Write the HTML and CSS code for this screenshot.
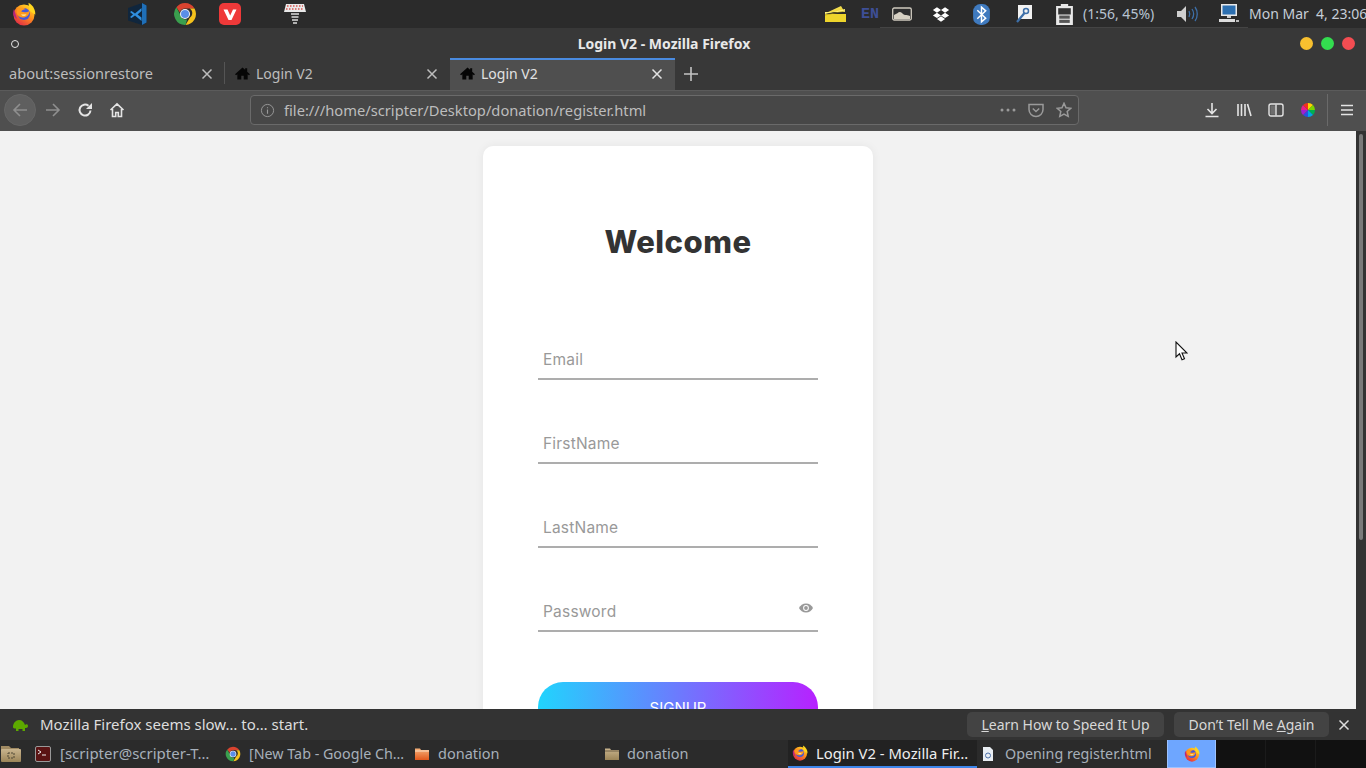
FILE: index.html
```html
<!DOCTYPE html>
<html lang="en">
<head>
<meta charset="utf-8">
<title>Login V2 - Mozilla Firefox</title>
<link rel="stylesheet" href="styles.css">
</head>
<body>
<svg class="defs" aria-hidden="true" width="0" height="0">
  <defs>
    <linearGradient id="fxg" x1="0.85" y1="0" x2="0.2" y2="1"><stop offset="0" stop-color="#ffe226"/><stop offset="0.45" stop-color="#ff8f1c"/><stop offset="1" stop-color="#e0244a"/></linearGradient>
    <linearGradient id="btn-f" x1="0" y1="0" x2="0" y2="1"><stop offset="0" stop-color="#c9b48e"/><stop offset="1" stop-color="#9c8558"/></linearGradient>
    <linearGradient id="org" x1="0" y1="0" x2="0" y2="1"><stop offset="0" stop-color="#f6b27a"/><stop offset="1" stop-color="#e2581c"/></linearGradient>
    <linearGradient id="ylw" x1="0" y1="0" x2="1" y2="1"><stop offset="0" stop-color="#fff27a"/><stop offset="1" stop-color="#e8c920"/></linearGradient>
    <symbol id="firefox" viewBox="0 0 24 24">
      <circle cx="12" cy="13" r="10.500" fill="url(#fxg)"/>
      <path d="M16.500.8c4.500 2.500 7 7 6.800 12l-6-4.300z" fill="#ffd71f"/>
      <path d="M2 7c-.8 2-1 4-.6 6 1 2 2 3 3.600 4z" fill="#b8257f"/>
      <circle cx="12" cy="12" r="6" fill="#4658d8"/>
      <path d="M5 7.500c2.500-2 6.500-2.300 8.500-.3-2 .3-4 1-4.300 2.300 2.500 1.300 6.300.8 8.300-.5.300 4-3.500 7-7.300 6.500-3.200-.4-5.200-2.500-5.700-5z" fill="#ff9a1e"/>
      <path d="M9 12.500h5.500c-1 1.500-4 2-5.500 0z" fill="#fff3b0"/>
    </symbol>
    <symbol id="chrome" viewBox="0 0 24 24">
      <path d="M12 1a11 11 0 0 1 9.500 5.500H12a5.500 5.500 0 0 0-5.200 3.700L3.400 5.300A11 11 0 0 1 12 1z" fill="#d9432f"/>
      <path d="M21.500 6.500A11 11 0 0 1 12.500 23l4.300-7.300a5.500 5.500 0 0 0 0-9.200z" fill="#f5c21c"/>
      <path d="M12.500 23A11 11 0 0 1 3.400 5.300l4.700 8.900a5.500 5.500 0 0 0 6 3.200z" fill="#3a9f4e"/>
      <circle cx="12" cy="12" r="5" fill="#f4f4f4"/><circle cx="12" cy="12" r="4" fill="#5a8ee8"/>
    </symbol>
    <symbol id="home" viewBox="0 0 16 16"><path d="M8 1.500 0 8.800l1.200 1.100L2.500 8.800V14.500h4.200v-4h2.600v4h4.200V8.800l1.300 1.100L16 8.800l-3-2.700V2.500h-2.200v1.600z" fill="currentColor"/></symbol>
    <symbol id="close" viewBox="0 0 12 12"><path d="M1.500 1.500l9 9M10.500 1.500l-9 9" stroke="currentColor" stroke-width="1.500" fill="none"/></symbol>
  </defs>
</svg>

<div class="desktop">
  <header class="panel">
    <div class="panel-left">
      <svg class="ic24 l-fx"><use href="#firefox"/></svg>
      <svg class="ic24 l-vs" viewBox="0 0 24 24"><path d="M3 6 17 1l4.500 2.500v17L17 23 3 18.500z" fill="#10263d"/><path d="M17 1l4.500 2.500v17L17 23z" fill="#1f6fb8"/><path d="M16.500 6 10 11.500 6.500 9 5 10l3 2.500L5 15l1.500 1L10 13.500l6.500 5.500v-3.500L12.500 12.500l4-3.500z" fill="#2f8fe0"/></svg>
      <svg class="ic24 l-ch"><use href="#chrome"/></svg>
      <svg class="ic24 l-vi" viewBox="0 0 24 24"><rect x="1" y="1" width="22" height="22" rx="5" fill="#ef3939"/><path d="M5.500 7.500h4l2.700 6 2.800-6h3.500L13.500 18h-3z" fill="#fff"/></svg>
      <svg class="ic24 l-fan" viewBox="0 0 24 24"><path d="M3 2h18l2 8H1z" fill="#e9e9e9"/><path d="M4 4h16M3 7h18" stroke="#d9534f" stroke-width="1.500" stroke-dasharray="1.500 1.500"/><path d="M8 12h8M8.500 15h7M9 18h6M10 21h4" stroke="#ddd" stroke-width="1.500"/></svg>
    </div>
    <div class="panel-right">
      <svg class="ri r-note" viewBox="0 0 21 16"><path d="M1 7 16 0l3 5z" fill="url(#ylw)"/><path d="M0 8 20 3v3H0z" fill="#fff27a"/><rect x="0" y="8" width="21" height="8" fill="#eed52c"/><path d="M0 9 20 5" stroke="#a08d16" stroke-width=".6"/></svg>
      <span class="lang">EN</span>
      <svg class="ri r-img" viewBox="0 0 20 14"><rect x=".7" y="1" width="18.600" height="12" rx="1.500" fill="#2e2e2e" stroke="#cfcabf" stroke-width="1.300"/><path d="M2 12V8c3-1 4-3 6-3s3 3 5 3 3 0 5 1v3z" fill="#d6d0c2"/></svg>
      <svg class="ri r-drop" viewBox="0 0 20 18"><path d="M5.500 1 10 4 5.500 7 1 4zM14.500 1 19 4l-4.500 3L10 4zM5.500 7 10 10l-4.500 3L1 10zM14.500 7 19 10l-4.500 3L10 10zM5.500 14 10 11l4.500 3L10 17z" fill="#fff"/></svg>
      <svg class="ri r-bt" viewBox="0 0 16 20"><rect x="0" y="0" width="16" height="20" rx="7" fill="#3f7abf"/><path d="M4 6l8 7.500L8 17V3l4 3.500L4 14" stroke="#fff" stroke-width="1.400" fill="none"/></svg>
      <svg class="ri r-tool" viewBox="0 0 18 20"><rect x="3" y="1" width="14" height="14" fill="#f2f2f2"/><circle cx="11" cy="7" r="2.500" fill="none" stroke="#3d6fa8" stroke-width="1.500"/><path d="M9.500 9 2 18" stroke="#3d6fa8" stroke-width="2.200"/></svg>
      <svg class="ri r-bat" viewBox="0 0 16 20"><path d="M4.500 0h7v2H16v18H0V2h4.500z" fill="#e8e8e8"/><rect x="2" y="4" width="12" height="6" fill="#333"/><rect x="3" y="11" width="10" height="3" fill="#555"/><rect x="3" y="15" width="10" height="3" fill="#555"/></svg>
      <span class="bat-text">(1:56, 45%)</span>
      <svg class="ri r-vol" viewBox="0 0 22 18"><path d="M1 6h4l5-5v16l-5-5H1z" fill="#cfcfcf"/><path d="M13 6c1 2 1 4 0 6M16 4c2 3 2 7 0 10M19 2c3 4 3 10 0 14" stroke="#3d6fa8" stroke-width="1.300" fill="none"/></svg>
      <svg class="ri r-pc" viewBox="0 0 21 20"><rect x="3" y="0" width="16" height="12" fill="#e8e8e8"/><rect x="4.500" y="1.500" width="13" height="9" fill="#2c6fb0"/><path d="M9 12h4v2H9z" fill="#ccc"/><path d="M1 15h16v3H1z" fill="#ddd"/><path d="M18 16h3v2h-3z" fill="#bbb"/></svg>
      <span class="clock">Mon Mar&nbsp; 4, 23:06</span>
    </div>
    <i class="panel-line"></i>
  </header>

  <div class="titlebar">
    <span class="title-dot"></span>
    <span class="title">Login V2 - Mozilla Firefox</span>
    <div class="lights"><i class="light yellow"></i><i class="light green"></i><i class="light red"></i></div>
  </div>

  <div class="tabstrip">
    <div class="tab sep"><span class="tab-label tab-plain">about:sessionrestore</span><svg class="tab-x"><use href="#close"/></svg></div>
    <div class="tab"><svg class="tab-home"><use href="#home"/></svg><span class="tab-label">Login V2</span><svg class="tab-x"><use href="#close"/></svg></div>
    <div class="tab active"><svg class="tab-home"><use href="#home"/></svg><span class="tab-label">Login V2</span><svg class="tab-x"><use href="#close"/></svg></div>
    <svg class="tab-plus" viewBox="0 0 14 14"><path d="M7 0v14M0 7h14" stroke="currentColor" stroke-width="1.600"/></svg>
  </div>

  <nav class="navbar">
    <span class="back"><svg class="nav-ic dim" viewBox="0 0 16 16"><path d="M15 8H2M8 2 2 8l6 6" stroke="currentColor" stroke-width="1.600" fill="none"/></svg></span>
    <svg class="nav-ic dim fwd" viewBox="0 0 16 16"><path d="M1 8h13M8 2l6 6-6 6" stroke="currentColor" stroke-width="1.600" fill="none"/></svg>
    <svg class="nav-ic rel" viewBox="0 0 16 16"><path d="M13.500 8.500A5.500 5.500 0 1 1 11.500 3.800" stroke="currentColor" stroke-width="2" fill="none"/><path d="M15 1v6H9z" fill="currentColor"/></svg>
    <svg class="nav-ic hm" viewBox="0 0 16 16"><path d="M1.500 8 8 1.800 14.500 8M3.500 7v7.500h3.200v-4h2.600v4h3.200V7" stroke="currentColor" stroke-width="1.600" fill="none"/></svg>
    <div class="urlbar">
      <svg class="u-info" viewBox="0 0 16 16"><circle cx="8" cy="8" r="6.500" stroke="currentColor" fill="none"/><path d="M8 7v4.500M8 4.500v1.200" stroke="currentColor" stroke-width="1.200"/></svg>
      <span class="url">file:///home/scripter/Desktop/donation/register.html</span>
      <svg class="u-dots" viewBox="0 0 16 4"><circle cx="2" cy="2" r="1.500"/><circle cx="8" cy="2" r="1.500"/><circle cx="14" cy="2" r="1.500"/></svg>
      <svg class="u-pocket" viewBox="0 0 16 16"><path d="M1 2.500h14v5a7 7 0 0 1-14 0z" stroke="currentColor" stroke-width="1.500" fill="none"/><path d="M4.800 6.500 8 9.500l3.200-3" stroke="currentColor" stroke-width="1.500" fill="none"/></svg>
      <svg class="u-star" viewBox="0 0 16 16"><path d="M8 1.300l2 4.500 4.800.5-3.600 3.200 1 4.800L8 12l-4.200 2.300 1-4.800L1.200 6.300 6 5.800z" stroke="currentColor" stroke-width="1.500" fill="none"/></svg>
    </div>
    <svg class="nav-ic dl" viewBox="0 0 16 16"><path d="M8 1v10M3.500 7 8 11.500 12.500 7M1.500 14.500h13" stroke="currentColor" stroke-width="1.600" fill="none"/></svg>
    <svg class="nav-ic lib" viewBox="0 0 16 16"><path d="M2 2v12M5.500 2v12M9 2v12M11.500 2l3.500 12" stroke="currentColor" stroke-width="1.600" fill="none"/></svg>
    <svg class="nav-ic side" viewBox="0 0 16 16"><rect x="1" y="2" width="14" height="12" rx="2" stroke="currentColor" stroke-width="1.400" fill="none"/><rect x="2.500" y="3.500" width="5" height="9" fill="currentColor" opacity=".2"/><path d="M8 2.500v11" stroke="currentColor" stroke-width="1.400"/></svg>
    <svg class="nav-ic wheel" viewBox="0 0 16 16">
      <path d="M8 8V1a7 7 0 0 1 5 2z" fill="#ffd400"/><path d="M8 8l5-5a7 7 0 0 1 2 5z" fill="#7bd500"/><path d="M8 8h7a7 7 0 0 1-2 5z" fill="#00b050"/><path d="M8 8l5 5a7 7 0 0 1-5 2z" fill="#00a7e8"/><path d="M8 8v7a7 7 0 0 1-5-2z" fill="#2a4fe0"/><path d="M8 8l-5 5a7 7 0 0 1-2-5z" fill="#a020d0"/><path d="M8 8H1a7 7 0 0 1 2-5z" fill="#e8208c"/><path d="M8 8 3 3a7 7 0 0 1 5-2z" fill="#f03020"/>
    </svg>
    <i class="nav-sep"></i>
    <svg class="nav-ic menu" viewBox="0 0 16 16"><path d="M2 3.500h12M2 8h12M2 12.500h12" stroke="currentColor" stroke-width="1.600"/></svg>
  </nav>

  <main class="viewport">
    <div class="page">
      <form class="card">
        <h1 class="welcome">Welcome</h1>
        <label class="field"><span class="ph">Email</span></label>
        <label class="field"><span class="ph">FirstName</span></label>
        <label class="field"><span class="ph">LastName</span></label>
        <label class="field"><span class="ph">Password</span>
          <svg class="eye" viewBox="0 0 14 10"><path d="M7 .5C3.800.5 1.200 2.500 0 5c1.200 2.500 3.800 4.500 7 4.500s5.800-2 7-4.500C12.800 2.500 10.200.5 7 .5z" fill="#999"/><circle cx="7" cy="5" r="2.900" fill="#fff"/><circle cx="7" cy="5" r="1.900" fill="#999"/></svg>
        </label>
        <button class="signup" type="button">SIGNUP</button>
      </form>
    </div>
    <div class="scrollbar"><i class="thumb"></i></div>
    <svg class="cursor" viewBox="0 0 13 20"><path d="M1 1v15l3.500-3.200 2.500 6 2.500-1-2.500-5.800H12z" fill="#fff" stroke="#111" stroke-width="1.100"/></svg>
  </main>

  <div class="notice">
    <svg class="turtle" viewBox="0 0 16 14"><path d="M1 9c0-4 3-7 6-7s5 2 6 5c1-1 3-1 3 1s-2 2-3 2v3h-2.500v-2h-4v2H4v-2.500C2 10.500 1 10 1 9z" fill="#5da900"/></svg>
    <span class="notice-text">Mozilla Firefox seems slow… to… start.</span>
    <button class="nbtn b1" type="button"><u>L</u>earn How to Speed It Up</button>
    <button class="nbtn b2" type="button">Don’t Tell Me <u>A</u>gain</button>
    <svg class="n-x"><use href="#close"/></svg>
  </div>

  <footer class="taskbar">
    <svg class="task-ic t-fm" viewBox="0 0 22 18"><path d="M1 1h8l2 2h8v3H1z" fill="#a08a62"/><rect x="1" y="4" width="20" height="13" rx="1" fill="url(#btn-f)"/><path d="M8 8h6v5H8z" fill="none" stroke="#4e4634" stroke-dasharray="2 1"/></svg>
    <svg class="task-ic t-term" viewBox="0 0 16 16"><rect x=".5" y=".5" width="15" height="15" rx="1.500" fill="#5a1414" stroke="#999"/><path d="M3 4l3 2-3 2M7 9h4" stroke="#eee" fill="none"/></svg>
    <span class="task t1">[scripter@scripter-T…</span>
    <svg class="task-ic t-ch"><use href="#chrome"/></svg>
    <span class="task t2">[New Tab - Google Ch…</span>
    <svg class="task-ic t-f1" viewBox="0 0 16 16"><path d="M1 2.500h5l1 1.500h8v10H1z" fill="url(#org)"/><path d="M1 5h14" stroke="#fbe0c8"/></svg>
    <span class="task t3">donation</span>
    <svg class="task-ic t-f2" viewBox="0 0 16 16"><path d="M1 2.500h5l1 1.500h8v10H1z" fill="url(#btn-f)"/><path d="M1 5h14" stroke="#6e5f44"/></svg>
    <span class="task t4">donation</span>
    <div class="task-active">
      <svg class="task-ic"><use href="#firefox"/></svg>
      <span class="task-active-label">Login V2 - Mozilla Fir…</span>
    </div>
    <svg class="task-ic t-doc" viewBox="0 0 16 16"><path d="M3 1h7l3 3v11H3z" fill="#e8edf2"/><circle cx="8" cy="9.500" r="2.500" fill="none" stroke="#4a6ea8"/></svg>
    <span class="task t5">Opening register.html</span>
    <div class="task-flash"><svg class="task-ic"><use href="#firefox"/></svg></div>
    <div class="task-empty"><i class="task-cell"></i><i class="task-cell"></i></div>
  </footer>
</div>
</body>
</html>
```
FILE: styles.css
```css
* { box-sizing: border-box; }
html, body { margin: 0; height: 100%; overflow: hidden; }
body { font-family: "Noto Sans", "Open Sans", sans-serif; font-size: 14px; color: #ccc; background: #333; }
.defs { position: absolute; }
svg { display: block; flex: none; }
i { display: block; }

.desktop { display: flex; flex-direction: column; width: 1366px; height: 768px; }

/* top panel */
.panel { position: relative; display: flex; justify-content: space-between; align-items: center; height: 28px; background: #2b2b2b; flex: none; }
.panel-left, .panel-right { display: flex; align-items: center; }
.ic24 { width: 24px; height: 24px; }
.l-fx { margin-left: 12px; }
.l-vs { margin-left: 89px; }
.l-ch { margin-left: 24px; }
.l-vi { margin-left: 21px; }
.l-fan { margin-left: 41px; }
.panel-line { position: absolute; left: 880px; width: 368px; bottom: 0; height: 1px; background: #444; }
.r-note { width: 21px; height: 16px; }
.lang { margin-left: 15px; width: 18px; font-family: "Liberation Mono", monospace; font-weight: 700; font-size: 15px; color: #3e4f96; }
.r-img { margin-left: 13px; width: 20px; height: 14px; }
.r-drop { margin-left: 20px; width: 18px; height: 17px; }
.r-bt { margin-left: 23px; width: 17px; height: 21px; }
.r-tool { margin-left: 25px; width: 18px; height: 20px; }
.r-bat { margin-left: 23px; width: 17px; height: 21px; }
.bat-text { margin: 0 0 2px 10px; width: 80px; font-size: 14px; color: #b8c4d2; white-space: nowrap; }
.r-vol { margin-left: 13px; width: 22px; height: 18px; }
.r-pc { margin-left: 20px; width: 21px; height: 20px; }
.clock { margin: 0 0 2px 10px; width: 117px; white-space: nowrap; font-size: 14px; color: #c6ced8; }

/* titlebar */
.titlebar { position: relative; display: flex; align-items: center; justify-content: center; height: 30px; flex: none; padding-right: 38px; background: #383838; }
.title { font-weight: 700; font-size: 14px; color: #e8e8e8; }
.title-dot { position: absolute; left: 11px; top: 12px; width: 8px; height: 8px; border: 1.500px solid #e6e6e6; border-radius: 50%; }
.lights { position: absolute; right: 11px; top: 9px; display: flex; gap: 8px; }
.light { width: 13px; height: 13px; border-radius: 50%; }
.yellow { background: #f8c02f; }
.green { background: #33dd4f; }
.red { background: #f44d52; }

/* tabs */
.tabstrip { display: flex; align-items: stretch; height: 32px; flex: none; background: #383838; }
.tab { position: relative; display: flex; align-items: center; width: 225px; padding: 0 10px 2px; color: #bdbdbd; }
.tab.sep::after { content: ""; position: absolute; right: 0; top: 4px; bottom: 6px; width: 1px; background: #555; }
.tab.active { padding-bottom: 4px; background: #4f4f4f; border-top: 2px solid #4a8be0; color: #e2e2e2; }
.tab-label { margin-left: 6px; flex: 1; white-space: nowrap; font-size: 14px; }
.tab-plain { margin-left: -1px; font-size: 14.600px; }
.tab-home { width: 15px; height: 15px; color: #060606; }
.tab-x { width: 12px; height: 12px; margin: 2px 2px 0 0; }
.tab-plus { margin: 9px 0 0 9px; width: 14px; height: 14px; color: #c4c4c4; }

/* nav */
.navbar { display: flex; align-items: center; height: 41px; flex: none; padding-bottom: 2px; background: #4f4f4f; border-top: 1px solid #5b5b5b; color: #e4e4e4; }
.back { display: flex; align-items: center; justify-content: center; width: 32px; height: 32px; margin-left: 4px; border-radius: 50%; background: #5f5f5f; border: 1px solid #666; }
.nav-ic { width: 16px; height: 16px; }
.dim { color: #8f8f8f; }
.fwd { margin-left: 9px; }
.rel { margin-left: 16px; }
.hm { margin-left: 16px; }
.urlbar { display: flex; align-items: center; width: 829px; height: 30px; margin-left: 125px; border: 1px solid #6a6a6a; border-radius: 4px; background: #474747; color: #9a9a9a; }
.u-info { width: 15px; height: 15px; margin-left: 9px; }
.url { margin-left: 9px; flex: 1; color: #bdbdbd; font-size: 14.700px; white-space: nowrap; }
.u-dots { width: 16px; height: 4px; fill: #9a9a9a; }
.u-pocket { width: 16px; height: 16px; margin-left: 12px; }
.u-star { width: 16px; height: 16px; margin: 0 6px 0 12px; }
.dl { margin-left: 125px; }
.lib { margin-left: 16px; }
.side { margin-left: 16px; }
.wheel { margin-left: 16px; }
.nav-sep { width: 1px; height: 32px; margin-left: 11px; background: #6a6a6a; }
.menu { margin-left: 11px; }

/* viewport */
.viewport { position: relative; display: flex; flex: 1; min-height: 0; overflow: hidden; background: #f2f2f2; }
.page { flex: 1; display: flex; justify-content: center; padding: 15px 0 0; }
.card { width: 390px; height: 700px; flex: none; padding: 78px 55px 0; background: #fff; border-radius: 10px; box-shadow: 0 0 10px rgba(0,0,0,.06); }
.welcome { margin: 0 0 80px; text-align: center; font-family: "Inter", "Lato", sans-serif; font-weight: 800; font-size: 31px; letter-spacing: .5px; line-height: 36px; color: #333; }
.field { position: relative; display: flex; align-items: center; height: 40px; margin-bottom: 44px; padding: 0 5px; border-bottom: 2px solid #adadad; }
.ph { font-family: "Inter", "Lato", sans-serif; font-size: 15.500px; letter-spacing: .2px; color: #999; }
.eye { position: absolute; right: 5px; top: 11px; width: 14px; height: 10px; }
.signup { display: block; width: 280px; height: 50px; margin-top: 50px; border: 0; border-radius: 25px; background: linear-gradient(90deg, #21d4fd, #b721ff); color: #fff; font-family: "Inter", "Lato", sans-serif; font-size: 15px; }
.scrollbar { width: 10px; flex: none; padding: 3px 3px 0; background: #333; }
.thumb { width: 4px; height: 406px; background: #7a7a7a; border-radius: 2px; }
.cursor { position: absolute; left: 1175px; top: 210px; width: 13px; height: 20px; }

/* notification */
.notice { display: flex; align-items: center; height: 31px; flex: none; padding: 0 16px 0 12px; background: #333; color: #ddd; font-size: 14px; }
.turtle { width: 16px; height: 14px; }
.notice-text { margin: 0 0 2px 12px; flex: 1; font-size: 15px; white-space: nowrap; }
.nbtn { height: 25px; border: 0; border-radius: 5px; background: #434343; color: #d8d8d8; font: inherit; }
.b1 { width: 197px; }
.b2 { width: 155px; margin-left: 10px; }
.n-x { width: 12px; height: 12px; margin-left: 9px; color: #ddd; }

/* taskbar */
.taskbar { display: flex; align-items: center; height: 28px; flex: none; background: #2b2b2b; }
.task-ic { width: 16px; height: 16px; }
.task { margin-bottom: 2px; font-size: 14.300px; color: #a7b0ba; white-space: nowrap; }
.t-fm { width: 22px; height: 18px; }
.t-term { margin-left: 13px; }
.t1 { margin-left: 9px; width: 165px; font-size: 15px; }
.t2 { margin-left: 8px; width: 165px; }
.t3 { margin-left: 8px; width: 166px; font-size: 14.500px; }
.t4 { margin-left: 7px; width: 161px; font-size: 14.500px; }
.task-active { display: flex; align-items: center; align-self: stretch; width: 189px; padding-left: 4px; background: #222; border-bottom: 2px solid #3d86ea; color: #eee; white-space: nowrap; }
.task-active-label { margin-left: 8px; font-size: 14.800px; }
.t-doc { margin-left: 3px; }
.t5 { margin-left: 9px; width: 162px; }
.task-flash { display: flex; align-items: center; justify-content: center; align-self: stretch; width: 49px; background: #6ea6ff; border: 1px solid #9cc2ff; border-top: 0; }
.task-empty { display: flex; flex: 1; align-self: stretch; background: #111; }
.task-cell { width: 50px; border-right: 1px solid #1b1b1b; }
```
